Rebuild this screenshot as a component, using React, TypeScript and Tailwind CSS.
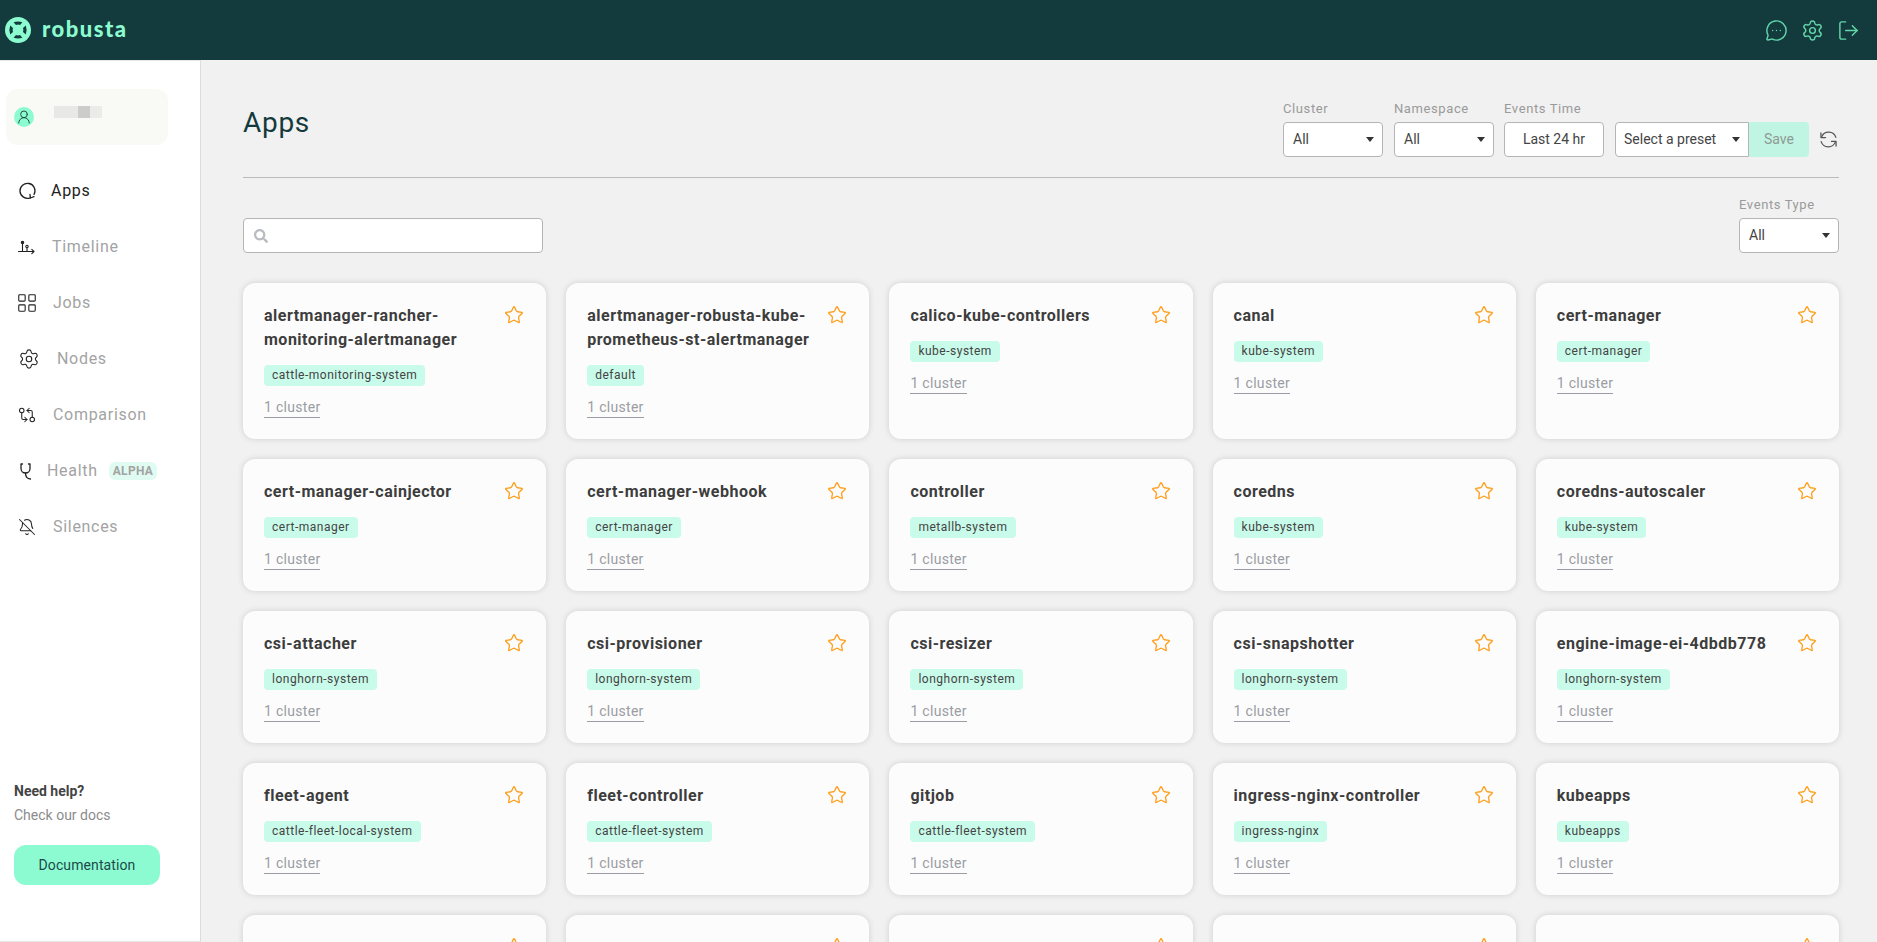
import { LayoutGrid, Settings, BellOff, GitCompareArrows, MessageCircleMore, LogOut, Star, UserRound } from 'lucide-react';
import { FaSearch } from 'react-icons/fa';

const rows = [
  [
    ['alertmanager-rancher-monitoring-alertmanager', 'cattle-monitoring-system'],
    ['alertmanager-robusta-kube-prometheus-st-alertmanager', 'default'],
    ['calico-kube-controllers', 'kube-system'],
    ['canal', 'kube-system'],
    ['cert-manager', 'cert-manager'],
  ],
  [
    ['cert-manager-cainjector', 'cert-manager'],
    ['cert-manager-webhook', 'cert-manager'],
    ['controller', 'metallb-system'],
    ['coredns', 'kube-system'],
    ['coredns-autoscaler', 'kube-system'],
  ],
  [
    ['csi-attacher', 'longhorn-system'],
    ['csi-provisioner', 'longhorn-system'],
    ['csi-resizer', 'longhorn-system'],
    ['csi-snapshotter', 'longhorn-system'],
    ['engine-image-ei-4dbdb778', 'longhorn-system'],
  ],
  [
    ['fleet-agent', 'cattle-fleet-local-system'],
    ['fleet-controller', 'cattle-fleet-system'],
    ['gitjob', 'cattle-fleet-system'],
    ['ingress-nginx-controller', 'ingress-nginx'],
    ['kubeapps', 'kubeapps'],
  ],
];

function AppsIcon() {
  return (
    <svg width="20" height="20" viewBox="0 0 20 20" fill="none" stroke="#222" strokeWidth="1.3" strokeLinecap="round" strokeLinejoin="round">
      <path d="M13.2 16.8A7.5 7.5 0 1 1 17 13.500" />
      <path d="M13 13.500l.4 3.500 3.600-1.300" />
    </svg>
  );
}

function TimelineIcon() {
  return (
    <svg width="20" height="20" viewBox="0 0 20 20" fill="none" stroke="#222" strokeWidth="1.100" strokeLinecap="round" strokeLinejoin="round">
      <path d="M1.500 14.500h15.500M14.800 12.300l2.200 2.200-2.200 2.200" />
      <path d="M5.500 14.500V7" />
      <circle cx="5.500" cy="5.500" r="1.200" fill="#222" />
      <circle cx="10" cy="9.500" r="1.200" />
      <path d="M10 11v3.500" />
    </svg>
  );
}

function StethoscopeIcon() {
  return (
    <svg width="20" height="20" viewBox="0 0 20 20" fill="none" stroke="#222" strokeWidth="1.3" strokeLinecap="round" strokeLinejoin="round">
      <path d="M5.500 3H4v4.500a4.500 4.500 0 0 0 9 0V3h-1.500" />
      <path d="M8.500 12.200c0 3 1.500 5.500 5 5.800" />
    </svg>
  );
}

function RefreshIcon() {
  return (
    <svg width="21" height="21" viewBox="0 0 20 20" fill="none" stroke="#555" strokeWidth="1.2" strokeLinecap="round" strokeLinejoin="round">
      <path d="M3.500 7.500A7.200 7.200 0 0 1 17 8" />
      <path d="M2.800 3.800v4.400h4.400" />
      <path d="M16.500 12.500A7.200 7.200 0 0 1 3 12" />
      <path d="M17.200 16.200v-4.400h-4.400" />
    </svg>
  );
}

const navItems = [
  { label: 'Apps', icon: <AppsIcon />, text: 'ml-[14px] text-[#222]' },
  { label: 'Timeline', icon: <TimelineIcon />, text: 'ml-[15px] text-[#a3a3a3]' },
  { label: 'Jobs', icon: <LayoutGrid size={22} strokeWidth={1.200} color="#222" className="shrink-0" />, text: 'ml-[16px] text-[#a3a3a3]' },
  { label: 'Nodes', icon: <Settings size={22} strokeWidth={1.200} color="#222" className="shrink-0 ml-[3px]" />, text: 'ml-[20px] text-[#a3a3a3]' },
  { label: 'Comparison', icon: <GitCompareArrows size={18} strokeWidth={1.400} color="#222" />, text: 'ml-[16px] text-[#a3a3a3]' },
  { label: 'Health', icon: <StethoscopeIcon />, text: 'ml-[10px] text-[#a3a3a3]' },
  { label: 'Silences', icon: <BellOff size={18} strokeWidth={1.400} color="#222" />, text: 'ml-[16px] text-[#a3a3a3]' },
];

function Logo() {
  return (
    <svg width="26" height="26" viewBox="0 0 26 26">
      <circle cx="13" cy="13" r="13" fill="#8cfbd0" />
      <path d="M8.600 5.200Q13 3.600 17.400 5.200L15 8Q13 7.200 11 8Z" fill="#133a3d" />
      <path d="M8.600 20.800Q13 22.400 17.400 20.800L15 18Q13 18.800 11 18Z" fill="#133a3d" />
      <path d="M5.200 8.600Q3.600 13 5.200 17.400L8 15Q7.200 13 8 11Z" fill="#133a3d" />
      <path d="M20.800 8.600Q22.400 13 20.800 17.400L18 15Q18.800 13 18 11Z" fill="#133a3d" />
    </svg>
  );
}

function Caret() {
  return <span className="w-0 h-0 border-l-[4px] border-r-[4px] border-t-[5px] border-l-transparent border-r-transparent border-t-[#333]" />;
}

function Filter({ label, value, width }: { label: string; value: string; width: string }) {
  return (
    <div className={width}>
      <div className="h-[20px] leading-[20px] mb-[3px] text-[13px] tracking-[0.6px] text-[#9a9a9a]">{label}</div>
      <div className="h-[35px] flex items-center justify-between px-[9px] pr-[8px] bg-white border border-[#b5b5b5] rounded-[4px] text-[14px] text-[#444]">
        <span>{value}</span>
        <Caret />
      </div>
    </div>
  );
}

function StarIcon() {
  return <Star size={20} strokeWidth={1.600} color="#ff9f1c" className="absolute top-[22px] right-[22px]" />;
}

function AppCard({ name, namespace }: { name: string; namespace: string }) {
  return (
    <div className="relative bg-[#fcfcfc] rounded-[12px] shadow-[0_0_6px_rgba(0,0,0,0.14)] p-[21px]">
      <StarIcon />
      <div className="pr-[36px] text-[16px] leading-[24px] font-bold tracking-[0.5px] text-[#3d3d3d] break-words">{name}</div>
      <div className="mt-[13px] flex">
        <span className="h-[21px] leading-[21px] px-[8px] rounded-[4px] bg-[#c9fbea] text-[12px] tracking-[0.5px] text-[#444]">{namespace}</span>
      </div>
      <div className="mt-[11px] flex">
        <span className="h-[21px] leading-[20px] border-b border-[#9a9da3] text-[14px] tracking-[0.3px] text-[#9a9da3]">1 cluster</span>
      </div>
    </div>
  );
}

export default function App() {
  return (
    <div className="h-screen overflow-hidden flex flex-col bg-[#f1f1f1] font-['Roboto',sans-serif]">
      {/* Top bar */}
      <header className="h-[60px] shrink-0 bg-[#133a3d] flex items-center justify-between pl-[5px] pr-[17px]">
        <div className="flex items-center gap-[11px]">
          <Logo />
          <span className="-mt-[4px] font-['Lato',sans-serif] font-black text-[22px] tracking-[1.500px] text-[#8cfbd0]">robusta</span>
        </div>
        <div className="flex items-center gap-[13px] text-[#63d6a9]">
          <MessageCircleMore size={23} strokeWidth={1.500} />
          <Settings size={23} strokeWidth={1.500} />
          <LogOut size={23} strokeWidth={1.500} />
        </div>
      </header>

      <div className="flex flex-1 min-h-0">
        {/* Sidebar */}
        <aside className="w-[201px] shrink-0 bg-white border-r border-[#dcdcdc] border-t border-t-[#e6e6e6] border-b border-b-[#e6e6e6] flex flex-col pt-[28px] pb-[56px]">
          <div className="mx-[6px] w-[162px] h-[56px] rounded-[12px] bg-[#f9f9f5] flex items-center pl-[8px]">
            <div className="w-[20px] h-[20px] rounded-full bg-[#8cfbd0] flex items-center justify-center">
              <UserRound size={16} strokeWidth={1.400} color="#1c3f3f" />
            </div>
            <div className="ml-[20px] -mt-[10px] flex h-[12px]">
              <div className="w-[24px] bg-[#e8e8e6]" />
              <div className="w-[12px] bg-[#cccccb]" />
              <div className="w-[12px] bg-[#ebebe9]" />
            </div>
          </div>
          <nav className="mt-[18px]">
            {navItems.map(item => (
              <div key={item.label} className="h-[56px] flex items-center pl-[17px]">
                <div className="w-[20px] flex justify-center">{item.icon}</div>
                <span className={`text-[16px] tracking-[0.7px] ${item.text}`}>{item.label}</span>
                {item.label === 'Health' && (
                  <span className="ml-[11px] h-[18px] leading-[18px] px-[4px] rounded-[6px] bg-[#e0fbf1] text-[12px] font-bold tracking-[0.3px] text-[#a3a3a3]">ALPHA</span>
                )}
              </div>
            ))}
          </nav>
          <div className="mt-auto px-[14px]">
            <div className="text-[14px] leading-[20px] font-bold text-[#444]">Need help?</div>
            <div className="mt-[4px] text-[14px] leading-[20px] text-[#8c8c8c]">Check our docs</div>
            <div className="mt-[20px] w-[146px] h-[40px] rounded-[12px] bg-[#8dfbd1] flex items-center justify-center text-[14px] tracking-[0.1px] text-[#1c4a4a]">Documentation</div>
          </div>
        </aside>

        {/* Main */}
        <main className="flex-1 min-w-0 pl-[42px] pr-[38px] pt-[39px]">
          <div className="flex items-start justify-between pb-[20px] border-b border-[#bbbbbb]">
            <h1 className="mt-[4px] text-[28px] leading-[40px] tracking-[0.7px] text-[#133a3d]">Apps</h1>
            <div className="flex items-end">
              <Filter label="Cluster" value="All" width="w-[100px] mr-[11px]" />
              <Filter label="Namespace" value="All" width="w-[100px] mr-[10px]" />
              <div className="w-[100px] mr-[11px]">
                <div className="h-[20px] leading-[20px] mb-[3px] text-[13px] tracking-[0.6px] text-[#9a9a9a]">Events Time</div>
                <div className="h-[35px] flex items-center justify-center bg-white border border-[#b5b5b5] rounded-[4px] text-[14px] text-[#444]">Last 24 hr</div>
              </div>
              <div className="flex h-[35px]">
                <div className="w-[134px] flex items-center justify-between px-[8px] bg-white border border-[#b5b5b5] rounded-l-[4px] text-[14px] text-[#444]">
                  <span>Select a preset</span>
                  <Caret />
                </div>
                <div className="w-[60px] flex items-center justify-center bg-[#bff5e2] rounded-r-[4px] text-[14px] text-[#8f9a96]">Save</div>
              </div>
              <div className="w-[30px] h-[35px] flex items-center justify-end">
                <RefreshIcon />
              </div>
            </div>
          </div>

          <div className="mt-[17px] flex items-end justify-between">
            <div className="w-[300px] h-[35px] flex items-center pl-[10px] bg-white border border-[#b5b5b5] rounded-[4px]">
              <FaSearch size={14} color="#b8bcc0" />
            </div>
            <Filter label="Events Type" value="All" width="w-[100px]" />
          </div>

          <div className="mt-[30px] grid grid-cols-5 gap-[20px]">
            {rows.flat().map(([name, namespace]) => (
              <AppCard key={name} name={name} namespace={namespace} />
            ))}
            {/* next row only peeks in above the fold */}
            {[0, 1, 2, 3, 4].map(i => (
              <div key={i} className="relative h-[132px] bg-[#fcfcfc] rounded-[12px] shadow-[0_0_6px_rgba(0,0,0,0.14)]">
                <StarIcon />
              </div>
            ))}
          </div>
        </main>
      </div>
    </div>
  );
}
